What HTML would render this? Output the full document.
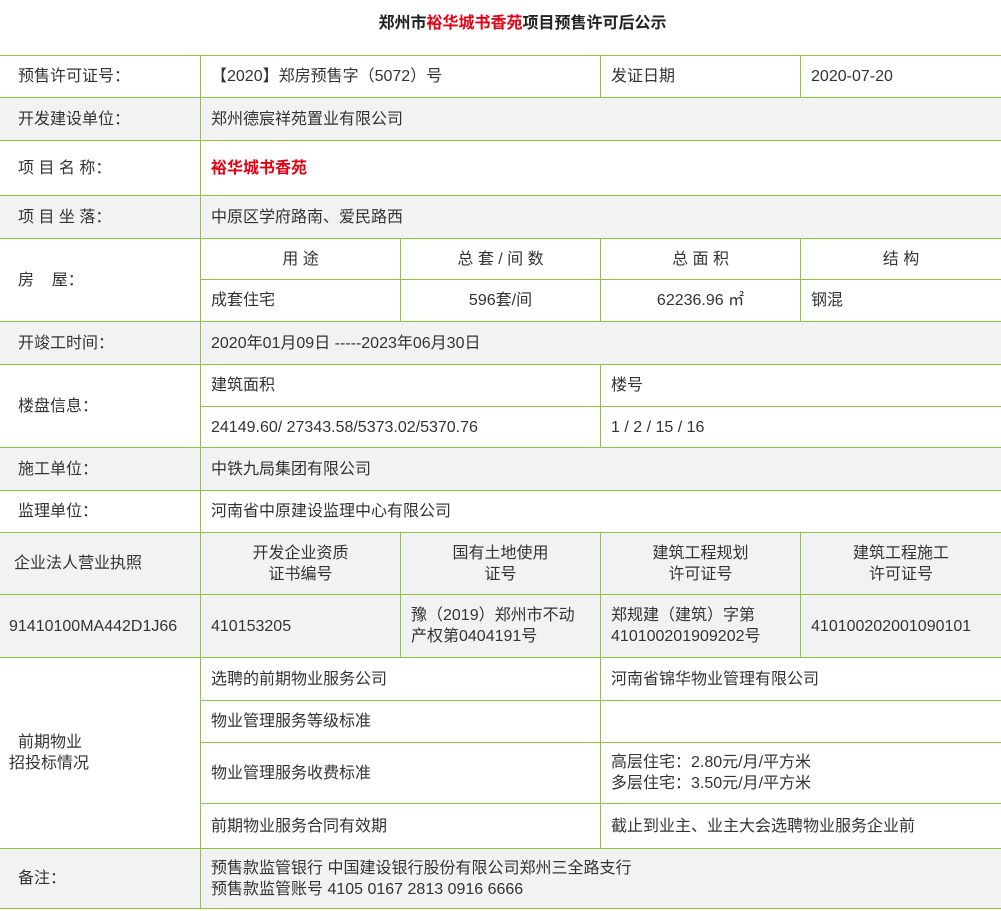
<!DOCTYPE html>
<html><head><meta charset="utf-8"><style>
body{margin:0;background:#fff;font-family:"Liberation Sans","Noto Sans CJK SC",sans-serif;color:#333;font-size:16px;}
h1{margin:0;height:55px;line-height:48px;text-align:center;font-size:16px;font-weight:bold;color:#222;padding-left:44px;box-sizing:border-box}
h1 span{color:#e60012}
table{border-collapse:collapse;table-layout:fixed;width:1002px;margin-left:-1px}
td{border:1px solid #8cc63f;padding:0 0 0 10px;line-height:21px;vertical-align:middle;white-space:nowrap}
td.l{padding-left:18px}
.g td{background:#f2f2f2}
.c{text-align:center;padding-left:0}
.red{color:#e60012;font-weight:bold}
</style></head><body>
<h1>郑州市<span>裕华城书香苑</span>项目预售许可后公示</h1>
<table>
<colgroup><col style="width:201px"><col style="width:200px"><col style="width:200px"><col style="width:200px"><col style="width:201px"></colgroup>
<tr style="height:42px"><td class="l">预售许可证号：</td><td colspan="2">【2020】郑房预售字（5072）号</td><td>发证日期</td><td>2020-07-20</td></tr>
<tr class="g" style="height:43px"><td class="l">开发建设单位：</td><td colspan="4">郑州德宸祥苑置业有限公司</td></tr>
<tr style="height:55px"><td class="l">项 目 名 称：</td><td colspan="4" class="red">裕华城书香苑</td></tr>
<tr class="g" style="height:43px"><td class="l">项 目 坐 落：</td><td colspan="4">中原区学府路南、爱民路西</td></tr>
<tr style="height:41px"><td class="l" rowspan="2">房&nbsp;&nbsp;&nbsp;&nbsp;屋：</td><td class="c">用 途</td><td class="c">总 套 / 间 数</td><td class="c">总 面 积</td><td class="c">结 构</td></tr>
<tr style="height:42px"><td>成套住宅</td><td class="c">596套/间</td><td class="c">62236.96 ㎡</td><td>钢混</td></tr>
<tr class="g" style="height:43px"><td class="l">开竣工时间：</td><td colspan="4">2020年01月09日 -----2023年06月30日</td></tr>
<tr style="height:42px"><td class="l" rowspan="2">楼盘信息：</td><td colspan="2">建筑面积</td><td colspan="2">楼号</td></tr>
<tr style="height:41px"><td colspan="2">24149.60/ 27343.58/5373.02/5370.76</td><td colspan="2">1 / 2 / 15 / 16</td></tr>
<tr class="g" style="height:43px"><td class="l">施工单位：</td><td colspan="4">中铁九局集团有限公司</td></tr>
<tr style="height:42px"><td class="l">监理单位：</td><td colspan="4">河南省中原建设监理中心有限公司</td></tr>
<tr class="g" style="height:62px"><td style="padding-left:14px">企业法人营业执照</td><td class="c">开发企业资质<br>证书编号</td><td class="c">国有土地使用<br>证号</td><td class="c">建筑工程规划<br>许可证号</td><td class="c">建筑工程施工<br>许可证号</td></tr>
<tr class="g" style="height:63px"><td style="padding-left:9px">91410100MA442D1J66</td><td>410153205</td><td>豫（2019）郑州市不动<br>产权第0404191号</td><td>郑规建（建筑）字第<br>410100201909202号</td><td>410100202001090101</td></tr>
<tr style="height:43px"><td rowspan="4" style="padding-left:9px"><div style="padding-left:9px">前期物业</div>招投标情况</td><td colspan="2">选聘的前期物业服务公司</td><td colspan="2">河南省锦华物业管理有限公司</td></tr>
<tr style="height:42px"><td colspan="2">物业管理服务等级标准</td><td colspan="2"></td></tr>
<tr style="height:61px"><td colspan="2">物业管理服务收费标准</td><td colspan="2">高层住宅：2.80元/月/平方米<br>多层住宅：3.50元/月/平方米</td></tr>
<tr style="height:45px"><td colspan="2">前期物业服务合同有效期</td><td colspan="2">截止到业主、业主大会选聘物业服务企业前</td></tr>
<tr class="g" style="height:60px"><td class="l">备注：</td><td colspan="4">预售款监管银行 中国建设银行股份有限公司郑州三全路支行<br>预售款监管账号 4105 0167 2813 0916 6666</td></tr>
</table>
</body></html>
